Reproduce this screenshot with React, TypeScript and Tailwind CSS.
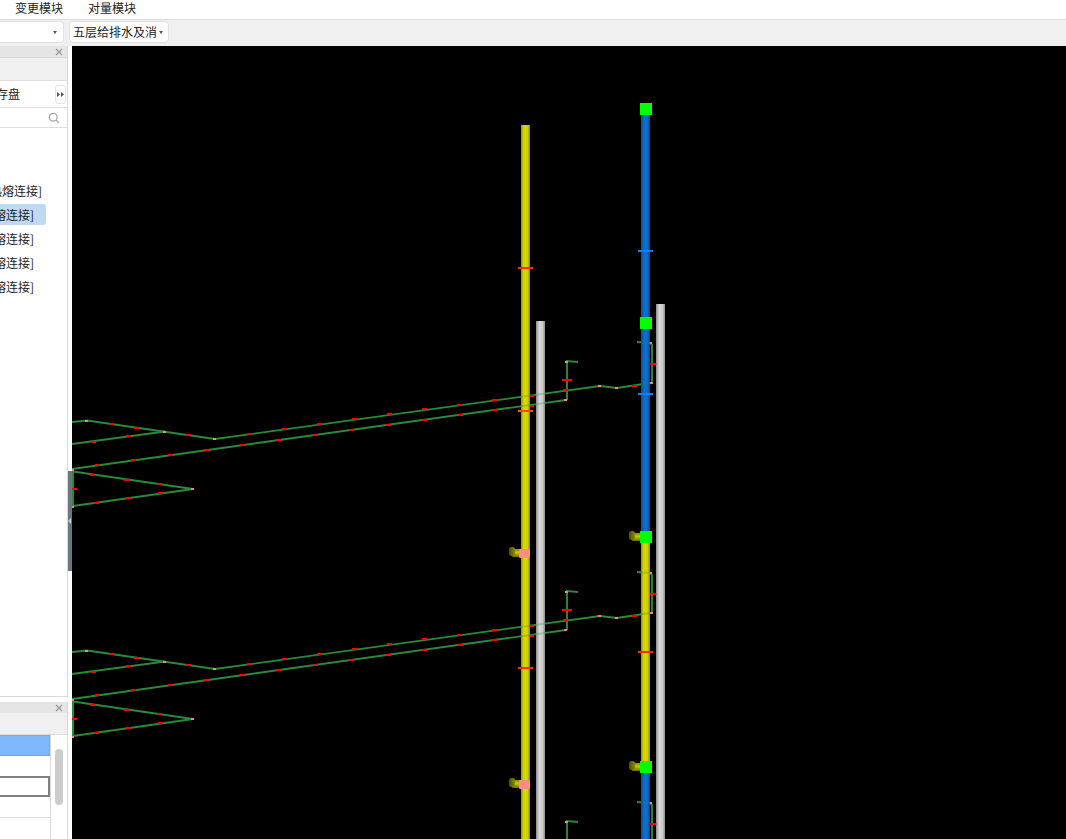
const font = { fontFamily: '"Noto Sans CJK SC", "Liberation Sans", sans-serif' };

const treeRows = [
  { text: "给水管[热熔连接]", pad: "pr-[4px]", selected: false },
  { text: "给水管[热熔连接]", pad: "pr-[12px]", selected: true },
  { text: "给水管[热熔连接]", pad: "pr-[12px]", selected: false },
  { text: "给水管[热熔连接]", pad: "pr-[12px]", selected: false },
  { text: "给水管[热熔连接]", pad: "pr-[12px]", selected: false },
];

// red hanger marks on the green branch lines, first floor coordinates
const redMarks = [
  [112, 424], [137, 428], [94, 442], [129, 436], [189, 435], [98, 465], [134, 460], [171, 455], [207, 450],
  [243, 445], [279, 440], [316, 435], [352, 430], [389, 425], [425, 420], [461, 415], [495, 410], [532, 406],
  [250, 434], [285, 429], [320, 424], [355, 419], [390, 414], [425, 409], [460, 405], [495, 400], [532, 396],
  [93, 475], [127, 480], [160, 484], [161, 493], [129, 498], [97, 503], [75, 489], [566, 390], [635, 386],
];

const pinkNodes = [
  [87, 421], [165, 432], [215, 439], [73, 470], [193, 489], [73, 507], [600, 386], [617, 388], [566, 400],
  [567, 362], [651, 343], [652, 383],
];

function Floor({ dy }: { dy: number }) {
  return (
    <g transform={`translate(0 ${dy})`}>
      <g fill="none" stroke="#2a8a3a" strokeWidth="1.9">
        <polyline points="72,422 87,420.5 215,439 600,386 617,388 650,383" />
        <polyline points="72,444 165,431.5" />
        <polyline points="72,469 566,400" />
        <polyline points="73,471.5 193,489 73,506" />
        <polyline points="578,362 567,361 567,400" />
        <polyline points="637,342 650,343 652,345 652,383" />
      </g>
      <path d="M73 471V507" stroke="#2a8a3a" strokeWidth="2" />
      {redMarks.map(([x, y]) => (
        <rect key={`${x}-${y}`} x={x - 3} y={y - 1} width="5" height="2" fill="#ff0000" shapeRendering="crispEdges" />
      ))}
      {pinkNodes.map(([x, y]) => (
        <rect key={`${x}-${y}`} x={x - 2} y={y - 1} width="3" height="2" fill="#ff8078" shapeRendering="crispEdges" />
      ))}
      <rect x="562" y="379" width="10" height="2" fill="#ff0000" shapeRendering="crispEdges" />
      <rect x="650" y="363" width="7" height="2" fill="#ff0000" shapeRendering="crispEdges" />
    </g>
  );
}

function Pipes({ over }: { over: boolean }) {
  return (
    <g opacity={over ? 0.72 : 1}>
      <rect x="521" y="125" width="9" height="714" fill="url(#yellowPipe)" />
      <rect x="536" y="321" width="9" height="518" fill="url(#grayPipe)" />
      <rect x="656" y="304" width="9" height="535" fill="url(#grayPipe)" />
      <rect x="641" y="109" width="9" height="428" fill="url(#bluePipe)" />
      <rect x="641" y="537" width="9" height="230" fill="url(#yellowPipe)" />
      <rect x="641" y="767" width="9" height="72" fill="url(#bluePipe)" />
    </g>
  );
}

function Stub({ x, y }: { x: number; y: number }) {
  return (
    <g>
      <rect x={x + 3} y={y + 2} width="10" height="8" rx="1" fill="url(#stubPipe)" />
      <rect x={x} y={y} width="6" height="9" rx="2.5" fill="url(#stubCap)" />
    </g>
  );
}

function PipeDrawing() {
  return (
    <svg width="994" height="793" viewBox="72 46 994 793" className="block">
      <defs>
        <linearGradient id="yellowPipe" x1="0" x2="1" y1="0" y2="0">
          <stop offset="0" stopColor="#8f8f00" />
          <stop offset="0.3" stopColor="#d8d800" />
          <stop offset="0.7" stopColor="#d4d400" />
          <stop offset="1" stopColor="#8a8a00" />
        </linearGradient>
        <linearGradient id="grayPipe" x1="0" x2="1" y1="0" y2="0">
          <stop offset="0" stopColor="#8c8c8c" />
          <stop offset="0.35" stopColor="#d6d6d6" />
          <stop offset="0.7" stopColor="#cfcfcf" />
          <stop offset="1" stopColor="#8a8a8a" />
        </linearGradient>
        <linearGradient id="bluePipe" x1="0" x2="1" y1="0" y2="0">
          <stop offset="0" stopColor="#0a4a8c" />
          <stop offset="0.35" stopColor="#0a70d0" />
          <stop offset="0.7" stopColor="#0a6cc8" />
          <stop offset="1" stopColor="#084a8a" />
        </linearGradient>
        <linearGradient id="stubPipe" x1="0" x2="0" y1="0" y2="1">
          <stop offset="0" stopColor="#8a8a00" />
          <stop offset="0.45" stopColor="#c8c800" />
          <stop offset="1" stopColor="#6a6a00" />
        </linearGradient>
        <linearGradient id="stubCap" x1="0" x2="1" y1="0" y2="0">
          <stop offset="0" stopColor="#4f4f00" />
          <stop offset="1" stopColor="#8a8a00" />
        </linearGradient>
      </defs>
      <Pipes over={false} />
      <Floor dy={0} />
      <Floor dy={230} />
      <Floor dy={460} />
      <Pipes over={true} />

      <g shapeRendering="crispEdges">
        <rect x="518" y="267" width="15" height="2" fill="#ff2a00" />
        <rect x="518" y="410" width="15" height="2" fill="#ff4a00" />
        <rect x="518" y="667" width="15" height="2" fill="#ff2a00" />
        <rect x="638" y="250" width="15" height="2" fill="#0a80ff" />
        <rect x="638" y="393" width="15" height="2" fill="#0a80ff" />
        <rect x="638" y="651" width="15" height="2" fill="#ff2a00" />
      </g>

      <Stub x={509} y={547} />
      <Stub x={509} y={778} />
      <Stub x={629} y={531} />
      <Stub x={629} y={761} />
      <rect x="519" y="549" width="11" height="9" rx="1.5" fill="#ff8a8a" />
      <rect x="519" y="780" width="11" height="9" rx="1.5" fill="#ff8a8a" />

      <g fill="#00ff00" shapeRendering="crispEdges">
        <rect x="640" y="103" width="12" height="12" />
        <rect x="640" y="317" width="12" height="12" />
        <rect x="640" y="531" width="12" height="12" />
        <rect x="640" y="761" width="12" height="12" />
      </g>
    </svg>
  );
}

function CloseIcon() {
  return (
    <svg width="8" height="8" viewBox="0 0 8 8" className="shrink-0">
      <path d="M1 1l6 6M7 1l-6 6" stroke="#9a9a9a" strokeWidth="1.2" fill="none" />
    </svg>
  );
}

function Caret() {
  return <span className="h-0 w-0 border-x-[2.5px] border-t-[3px] border-x-transparent border-t-[#555]" />;
}

function LeftPanels() {
  return (
    <div className="relative flex w-[72px] shrink-0 flex-col bg-white">
      <div className="flex h-[652px] w-[68px] flex-col border-r border-b border-[#d9d9d9]">
        <div className="flex h-[12px] items-center justify-end border-b border-[#d9d9d9] bg-[#e5e5e5] pr-[4px]">
          <CloseIcon />
        </div>
        <div className="h-[23px] border-b border-[#dedede] bg-[#f0f0f0]" />
        <div className="flex h-[27px] items-center justify-between border-b border-[#dedede] bg-white pr-[1px]">
          <div className="flex w-[20px] justify-end overflow-hidden text-[12px] leading-none whitespace-nowrap text-[#222]">
            <span className="shrink-0">存盘</span>
          </div>
          <span className="flex h-[19px] w-[11px] items-center justify-center rounded-[3px] border border-[#e4e4e4]">
            <svg width="7" height="5" viewBox="0 0 7 5" fill="#555">
              <path d="M0 0l3 2.5L0 5zM4 0l3 2.5L4 5z" />
            </svg>
          </span>
        </div>
        <div className="flex h-[20px] items-center justify-end border-b border-[#dedede] pr-[7px]">
          <svg width="12" height="12" viewBox="0 0 12 12" fill="none" stroke="#a8a8a8" strokeWidth="1.3">
            <circle cx="5.2" cy="5.2" r="3.9" />
            <path d="M8 8l3 3" />
          </svg>
        </div>
        <div className="flex flex-col pt-[52px] pr-[21px]">
          {treeRows.map((row, i) => (
            <div
              key={i}
              className={`mb-[3px] flex h-[21px] items-center justify-end overflow-hidden rounded-r-[3px] text-[12px] leading-none whitespace-nowrap text-[#222] ${row.selected ? "bg-[#c0d9f2]" : ""}`}
            >
              <span className={`shrink-0 ${row.pad}`}>{row.text}</span>
            </div>
          ))}
        </div>
      </div>
      <div className="mt-[5px] flex h-[137px] w-[68px] flex-col border-r border-[#d9d9d9]">
        <div className="flex h-[11px] items-center justify-end bg-[#e5e5e5] pr-[4px]">
          <CloseIcon />
        </div>
        <div className="h-[22px] border-b border-[#dedede] bg-[#f0f0f0]" />
        <div className="flex min-h-0 flex-1">
          <div className="flex w-[51px] flex-col border-r border-[#d9d9d9]">
            <div className="h-[21px] border border-l-0 border-[#6ea8ee] bg-[#7fb9fb]" />
            <div className="h-[20px]" />
            <div className="h-[21px] border-2 border-l-0 border-[#808080]" />
            <div className="h-[21px] border-b border-[#dedede]" />
          </div>
          <div className="flex flex-1 justify-center pt-[14px] pr-[1px]">
            <div className="h-[56px] w-[8px] rounded-full bg-[#cccccc]" />
          </div>
        </div>
      </div>
      <div className="absolute top-[425px] right-0 flex h-[100px] w-[4px] items-center bg-[#6b7682]">
        <span className="h-0 w-0 border-y-[3px] border-r-[3px] border-y-transparent border-r-[#c8ccd0]" />
      </div>
    </div>
  );
}

export default function App() {
  return (
    <div className="flex h-[839px] w-[1066px] flex-col overflow-hidden bg-white" style={font}>
      <div className="flex h-[20px] shrink-0 items-start gap-[25px] border-b border-[#dcdcdc] bg-white pl-[15px] text-[12px] leading-[15px] text-[#222]">
        <span>变更模块</span>
        <span>对量模块</span>
      </div>
      <div className="flex h-[26px] shrink-0 items-center gap-[5px] bg-[#f0f0f0] pb-[2px] text-[12px] text-[#222]">
        <div className="flex h-[22px] w-[64px] items-center justify-end rounded-r-[4px] border border-l-0 border-[#e2e2e2] bg-white pr-[6px]">
          <Caret />
        </div>
        <div className="flex h-[22px] w-[100px] items-center gap-[2px] rounded-[4px] border border-[#e2e2e2] bg-white pl-[3px]">
          <span className="whitespace-nowrap">五层给排水及消</span>
          <Caret />
        </div>
      </div>
      <div className="flex min-h-0 flex-1">
        <LeftPanels />
        <div className="flex-1 overflow-hidden bg-black">
          <PipeDrawing />
        </div>
      </div>
    </div>
  );
}
